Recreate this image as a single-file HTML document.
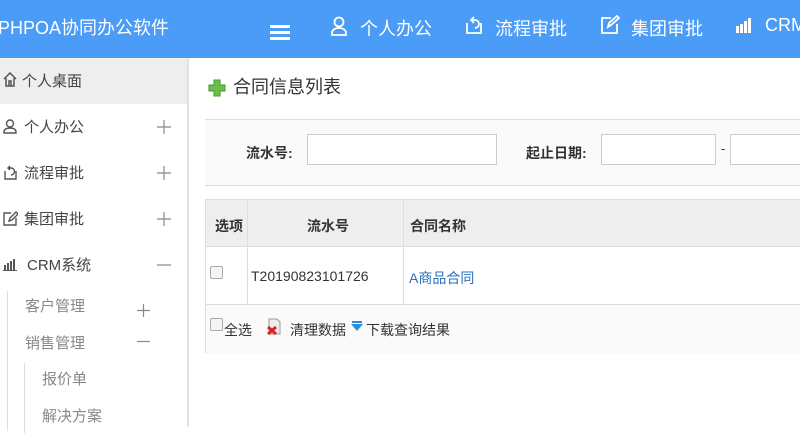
<!DOCTYPE html>
<html><head><meta charset="utf-8"><style>
*{margin:0;padding:0;box-sizing:border-box}
body{width:800px;height:427px;overflow:hidden;background:#fff;font-family:"Liberation Sans","Noto Sans CJK SC",sans-serif;position:relative;color:#333}
.hd{position:absolute;left:0;top:0;width:800px;height:58px;background:#4a9cf6;color:#fff}
.hd span{position:absolute;top:15px;font-size:18px;white-space:nowrap}
.side{position:absolute;left:0;top:58px;width:189px;height:369px;border-right:2px solid #e2e2e2;background:#fff}
.it{position:absolute;left:0;width:187px;font-size:15px;color:#444}
.pl{position:absolute}
.sub{position:absolute;font-size:15px;color:#888}
.main{position:absolute;left:205px;top:58px;right:0}
input{position:absolute;height:31px;border:1px solid #ccc;background:#fff}
</style></head><body>
<div class="hd">
<span style="left:-2px;top:14px;font-size:18px">PHPOA协同办公软件</span>
<svg style="position:absolute;left:270px;top:24px" width="20" height="16"><rect y="1" width="20" height="3" fill="#fff"/><rect y="7" width="20" height="3" fill="#fff"/><rect y="13" width="20" height="3" fill="#fff"/></svg>
<svg style="position:absolute;left:330px;top:16px" width="18" height="20" fill="none" stroke="#fff" stroke-width="1.8"><circle cx="9" cy="6" r="4.5"/><path d="M2 19v-2c0-3 3-5 7-5s7 2 7 5v2z"/></svg>
<span style="left:360px">个人办公</span>
<svg style="position:absolute;left:464px;top:15px" width="20" height="20" fill="none" stroke="#fff" stroke-width="1.8"><path d="M3 8v10h14V8M10 2l-3 3 3 3M7 5h4a4 4 0 0 1 0 8"/></svg>
<span style="left:495px">流程审批</span>
<svg style="position:absolute;left:600px;top:15px" width="20" height="20" fill="none" stroke="#fff" stroke-width="1.8"><path d="M11 3H2v15h15V9M8 12l1-4 8-7 2 2-8 7z"/></svg>
<span style="left:631px">集团审批</span>
<svg style="position:absolute;left:735px;top:16px" width="18" height="18" fill="#fff"><rect x="1" y="10" width="3" height="7"/><rect x="5" y="8" width="3" height="9"/><rect x="9" y="5" width="3" height="12"/><rect x="13" y="2" width="3" height="15"/></svg>
<span style="left:765px">CRM</span>
</div>
<div class="side">
<div class="it" style="top:0;height:46px;background:#eee"><span style="position:absolute;left:22px;top:12px">个人桌面</span>
<svg style="position:absolute;left:3px;top:14px" width="14" height="15" fill="none" stroke="#555" stroke-width="1.5"><path d="M1 7L7 1l6 6M3 6v8h8V6M6 14V9h2v5"/></svg></div>
<div class="it" style="top:58px"><svg style="position:absolute;left:3px;top:3px" width="14" height="15" fill="none" stroke="#555" stroke-width="1.4"><circle cx="7" cy="4.5" r="3.5"/><path d="M1 14v-1c0-3 3-4 6-4s6 1 6 4v1z"/></svg><span style="position:absolute;left:24px;top:0">个人办公</span></div>
<svg class="pl" style="left:157px;top:62px" width="14" height="14" stroke="#888" stroke-width="1.2"><path d="M0 7h14M7 0v14"/></svg>
<div class="it" style="top:104px"><svg style="position:absolute;left:3px;top:3px" width="15" height="15" fill="none" stroke="#555" stroke-width="1.4"><path d="M2 6v8h11V6M7 1L5 3l2 2M5 3h3a3 3 0 0 1 0 7"/></svg><span style="position:absolute;left:24px;top:0">流程审批</span></div>
<svg class="pl" style="left:157px;top:108px" width="14" height="14" stroke="#888" stroke-width="1.2"><path d="M0 7h14M7 0v14"/></svg>
<div class="it" style="top:150px"><svg style="position:absolute;left:3px;top:3px" width="15" height="15" fill="none" stroke="#555" stroke-width="1.4"><path d="M8 2H1v12h12V7M6 10l1-3 6-6 2 2-6 6z"/></svg><span style="position:absolute;left:24px;top:0">集团审批</span></div>
<svg class="pl" style="left:157px;top:154px" width="14" height="14" stroke="#888" stroke-width="1.2"><path d="M0 7h14M7 0v14"/></svg>
<div class="it" style="top:196px"><svg style="position:absolute;left:3px;top:4px" width="14" height="13" fill="#555"><rect x="1" y="7" width="2" height="5"/><rect x="4" y="5" width="2" height="7"/><rect x="7" y="3" width="2" height="9"/><rect x="10" y="1" width="2" height="11"/><rect x="0" y="12" width="14" height="1"/></svg><span style="position:absolute;left:27px;top:0">CRM系统</span></div>
<svg class="pl" style="left:157px;top:200px" width="14" height="14" stroke="#888" stroke-width="1.2"><path d="M0 7h14"/></svg>
<div style="position:absolute;left:7px;top:233px;width:1px;height:140px;background:#ddd"></div>
<div class="sub" style="left:25px;top:237px">客户管理</div>
<svg class="pl" style="left:137px;top:246px" width="13" height="13" stroke="#888" stroke-width="1.2"><path d="M0 6.5h13M6.5 0v13"/></svg>
<div class="sub" style="left:25px;top:274px">销售管理</div>
<svg class="pl" style="left:137px;top:277px" width="13" height="13" stroke="#888" stroke-width="1.2"><path d="M0 6.5h13"/></svg>
<div style="position:absolute;left:24px;top:305px;width:1px;height:70px;background:#ddd"></div>
<div class="sub" style="left:42px;top:310px">报价单</div>
<div class="sub" style="left:42px;top:347px">解决方案</div>
</div>
<div class="main">
<svg style="position:absolute;left:3px;top:21px" width="18" height="18"><path d="M6 1h6v5h5v6h-5v5H6v-5H1V6h5z" fill="#6cc04a" stroke="#3f9a2a"/></svg>
<div style="position:absolute;left:28px;top:15px;font-size:18px;color:#333">合同信息列表</div>
<div style="position:absolute;left:0;top:61px;width:595px;height:67px;border-top:1px solid #ddd;border-bottom:1px solid #ddd;background:#fafafa">
<span style="position:absolute;left:41px;top:23px;font-size:14px;font-weight:bold">流水号:</span>
<input style="left:102px;top:14px;width:190px">
<span style="position:absolute;left:321px;top:23px;font-size:14px;font-weight:bold">起止日期:</span>
<input style="left:396px;top:14px;width:115px">
<span style="position:absolute;left:516px;top:21px;font-size:13px">-</span>
<input style="left:525px;top:14px;width:80px">
</div>
<div style="position:absolute;left:0;top:141px;width:600px;height:154px;border:1px solid #ddd;border-right:none">
<div style="position:absolute;left:0;top:0;width:600px;height:47px;background:#eee;border-bottom:1px solid #ddd"></div>
<div style="position:absolute;left:0;top:104px;width:600px;height:49px;background:#fafafa;border-top:1px solid #ddd"></div>
<div style="position:absolute;left:41px;top:0;width:1px;height:104px;background:#ddd"></div>
<div style="position:absolute;left:197px;top:0;width:1px;height:104px;background:#ddd"></div>
<span style="position:absolute;left:9px;top:16px;font-size:14px;font-weight:bold">选项</span>
<span style="position:absolute;left:101px;top:16px;font-size:14px;font-weight:bold">流水号</span>
<span style="position:absolute;left:204px;top:16px;font-size:14px;font-weight:bold">合同名称</span>
<div style="position:absolute;left:4px;top:66px;width:13px;height:13px;border:1px solid #aaa;border-radius:2px;background:#f4f4f4"></div>
<span style="position:absolute;left:45px;top:68px;font-size:14px">T20190823101726</span>
<span style="position:absolute;left:203px;top:68px;font-size:14px;color:#2a6fb8">A商品合同</span>
<div style="position:absolute;left:4px;top:118px;width:13px;height:13px;border:1px solid #aaa;border-radius:2px;background:#f4f4f4"></div>
<span style="position:absolute;left:18px;top:120px;font-size:14px">全选</span>
<svg style="position:absolute;left:60px;top:118px" width="16" height="17"><path d="M3 1h8l3 3v12H3z" fill="#eee" stroke="#999"/><path d="M2 9l8 7M10 9l-8 7" stroke="#d22" stroke-width="3"/></svg>
<span style="position:absolute;left:84px;top:120px;font-size:14px">清理数据</span>
<svg style="position:absolute;left:145px;top:121px" width="12" height="11"><rect x="1" y="0" width="10" height="2" fill="#2a8fd8"/><path d="M0 3h12L6 10z" fill="#2a8fd8"/></svg>
<span style="position:absolute;left:160px;top:120px;font-size:14px">下载查询结果</span>
</div>
</div>
</body></html>
